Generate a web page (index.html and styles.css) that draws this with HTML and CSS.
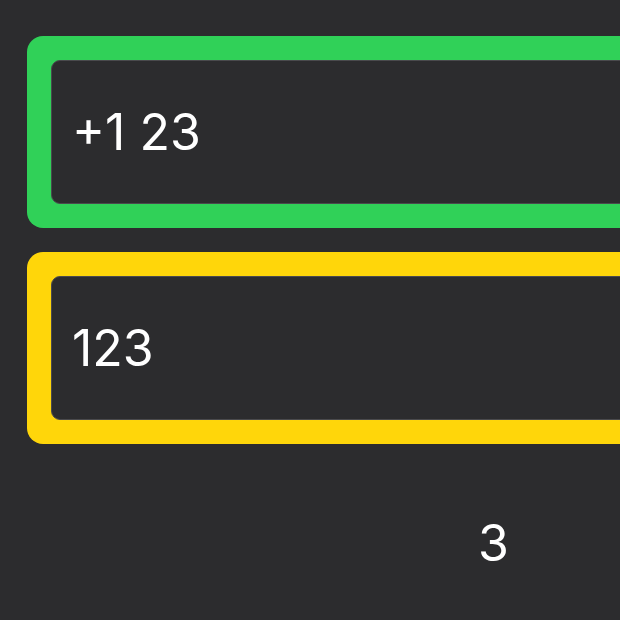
FILE: index.html
```html
<!DOCTYPE html>
<html>
<head>
<meta charset="utf-8">
<link rel="stylesheet" href="styles.css">
</head>
<body>
<div class="page">
  <div class="field field-green">
    <div class="field-inner"><span class="value">+1 23</span></div>
  </div>
  <div class="field field-yellow">
    <div class="field-inner"><span class="value">123</span></div>
  </div>
  <div class="count">3</div>
</div>
</body>
</html>
```
FILE: styles.css
```css
html, body {
  margin: 0;
  padding: 0;
  background: #2c2c2e;
  overflow: hidden;
}
.page {
  padding: 36px 0 0 27px;
  width: 760px;
  display: flex;
  flex-direction: column;
  gap: 24px;
  font-family: Inter, "Liberation Sans", sans-serif;
  color: #ffffff;
}
.field {
  height: 192px;
  box-sizing: border-box;
  padding: 24px;
  border-radius: 16px;
  display: flex;
}
.field-green { background: #30d158; }
.field-yellow { background: #ffd60a; }
.field-inner {
  flex: 1;
  background: #2c2c2e;
  border: 1px solid #4a4a4d;
  border-radius: 9px;
  display: flex;
  align-items: center;
  padding-left: 20px;
}
.value {
  font-size: 50px;
  line-height: 60px;
}
.count {
  margin-top: 45px;
  padding-left: 451px;
  font-size: 50px;
  line-height: 60px;
}
```
